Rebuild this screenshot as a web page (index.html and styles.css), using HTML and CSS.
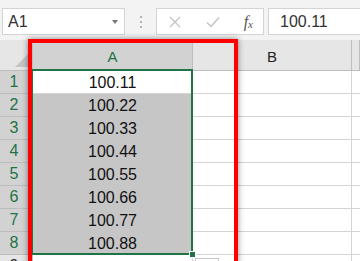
FILE: index.html
```html
<!DOCTYPE html>
<html lang="en">
<head>
	<meta charset="utf-8">
	<title>sheet</title>
	<link rel="stylesheet" href="styles.css">
</head>
<body>

<div id="app">
	<div class="toolbar">
		<div class="namebox">
			<span class="ref">A1</span>
			<span class="caret"></span>
		</div>
		<div class="dots"><i></i><i></i><i></i></div>
		<div class="fxbox">
			<svg class="ico" width="14" height="14" viewBox="0 0 14 14"><path d="M2 2 L12 12 M12 2 L2 12" stroke="#c4c4c4" stroke-width="1.4" fill="none"/></svg>
			<svg class="ico" width="16" height="14" viewBox="0 0 16 14"><path d="M2 7.5 L6 11.5 L14 2.5" stroke="#c4c4c4" stroke-width="1.5" fill="none"/></svg>
			<span class="fx">f<sub>x</sub></span>
		</div>
		<div class="input">100.11</div>
	</div>

	<div class="sheet">
		<div class="corner"><span class="tri"></span></div>
		<div class="colhead sel">A</div>
		<div class="colhead">B</div>
		<div class="colhead last"></div>

		<div class="rowhead sel">1</div><div class="cell active">100.11</div><div class="cell"></div><div class="cell last"></div>
		<div class="rowhead sel">2</div><div class="cell shade">100.22</div><div class="cell"></div><div class="cell last"></div>
		<div class="rowhead sel">3</div><div class="cell shade">100.33</div><div class="cell"></div><div class="cell last"></div>
		<div class="rowhead sel">4</div><div class="cell shade">100.44</div><div class="cell"></div><div class="cell last"></div>
		<div class="rowhead sel">5</div><div class="cell shade">100.55</div><div class="cell"></div><div class="cell last"></div>
		<div class="rowhead sel">6</div><div class="cell shade">100.66</div><div class="cell"></div><div class="cell last"></div>
		<div class="rowhead sel">7</div><div class="cell shade">100.77</div><div class="cell"></div><div class="cell last"></div>
		<div class="rowhead sel">8</div><div class="cell shade">100.88</div><div class="cell"></div><div class="cell last"></div>
		<div class="rowhead">9</div><div class="cell"></div><div class="cell"></div><div class="cell last"></div>
	</div>

	<div class="selection"></div>
	<div class="handle"></div>
	<div class="quick"></div>
	<div class="mark"></div>
</div>

</body>
</html>
```

FILE: styles.css
```css
html, body {
	margin: 0;
	padding: 0;
	overflow: hidden;
}
body {
	font-family: "Liberation Sans", Arial, sans-serif;
	background: #fff;
}
#app {
	position: relative;
	width: 360px;
	height: 261px;
	overflow: hidden;
}

/* formula bar */
.toolbar {
	height: 40px;
	box-sizing: border-box;
	padding: 8px 0 0 2px;
	background: #f3f3f3;
	display: flex;
	align-items: flex-start;
}
.namebox, .fxbox, .input {
	height: 27px;
	box-sizing: border-box;
	background: #fff;
	border: 1px solid #d4d4d4;
	display: flex;
	align-items: center;
}
.namebox {
	width: 123px;
	padding: 0 6px 0 5px;
	justify-content: space-between;
}
.ref {
	font-size: 16px;
	color: #333;
}
.caret {
	width: 0;
	height: 0;
	border-left: 3.5px solid transparent;
	border-right: 3.5px solid transparent;
	border-top: 4px solid #777;
	margin-top: 1px;
}
.dots {
	width: 31px;
	height: 27px;
	display: flex;
	flex-direction: column;
	align-items: center;
	justify-content: center;
	gap: 3px;
}
.dots i {
	width: 2px;
	height: 2px;
	background: #b4b4b4;
}
.fxbox {
	width: 108px;
	padding: 0 10px 0 11px;
	justify-content: space-between;
}
.fx {
	font-family: "Liberation Serif", serif;
	font-style: italic;
	font-size: 16px;
	color: #555;
	line-height: 1;
}
.fx sub {
	font-size: 11px;
	vertical-align: -1px;
}
.input {
	flex: 1;
	margin-left: 4px;
	padding-left: 11px;
	border-right: none;
	font-size: 16px;
	color: #333;
}

/* grid */
.sheet {
	display: grid;
	grid-template-columns: 33px 160px 159px 1fr;
	grid-template-rows: 31px repeat(9, 23px);
}
.sheet > div {
	box-sizing: border-box;
	border-right: 1px solid #d4d4d4;
	border-bottom: 1px solid #d4d4d4;
	display: flex;
	align-items: center;
	justify-content: center;
}
.corner {
	background: #e6e6e6;
	position: relative;
	border-color: #bdbdbd !important;
}
.tri {
	position: absolute;
	right: 4px;
	bottom: 3px;
	width: 0;
	height: 0;
	border-left: 13px solid transparent;
	border-bottom: 13px solid #c4c4c4;
}
.colhead {
	background: #e6e6e6;
	font-size: 15px;
	color: #222;
	border-color: #bdbdbd !important;
	padding-top: 3px;
}
.colhead.sel {
	background: #d2d2d2;
	color: #217346;
	border-bottom: 2px solid #217346 !important;
}
.rowhead {
	background: #e6e6e6;
	font-size: 16px;
	color: #333;
	border-color: #bdbdbd !important;
	padding-right: 4px;
}
.rowhead.sel {
	background: #d2d2d2;
	color: #217346;
}
.cell {
	font-size: 16px;
	color: #111;
	padding-top: 1px;
}
.cell.shade {
	background: #c6c6c6;
	border-bottom-color: #c6c6c6 !important;
}
.cell.active {
	background: #fff;
}
.cell.last {
	border-right: none;
}

/* overlays */
.selection {
	position: absolute;
	left: 31px;
	top: 69px;
	width: 162px;
	height: 186px;
	box-sizing: border-box;
	border: 2px solid #217346;
}
.handle {
	position: absolute;
	left: 189px;
	top: 251px;
	width: 5px;
	height: 5px;
	background: #217346;
	border: 1px solid #fff;
}
.quick {
	position: absolute;
	left: 195px;
	top: 258px;
	width: 22px;
	height: 10px;
	border: 1px solid #c8c8c8;
	background: #fff;
}
.mark {
	position: absolute;
	left: 28px;
	top: 39px;
	width: 210px;
	height: 240px;
	box-sizing: border-box;
	border: 4px solid #f00;
	box-shadow: 0 0 6px rgba(0, 0, 0, 0.45);
}
```
